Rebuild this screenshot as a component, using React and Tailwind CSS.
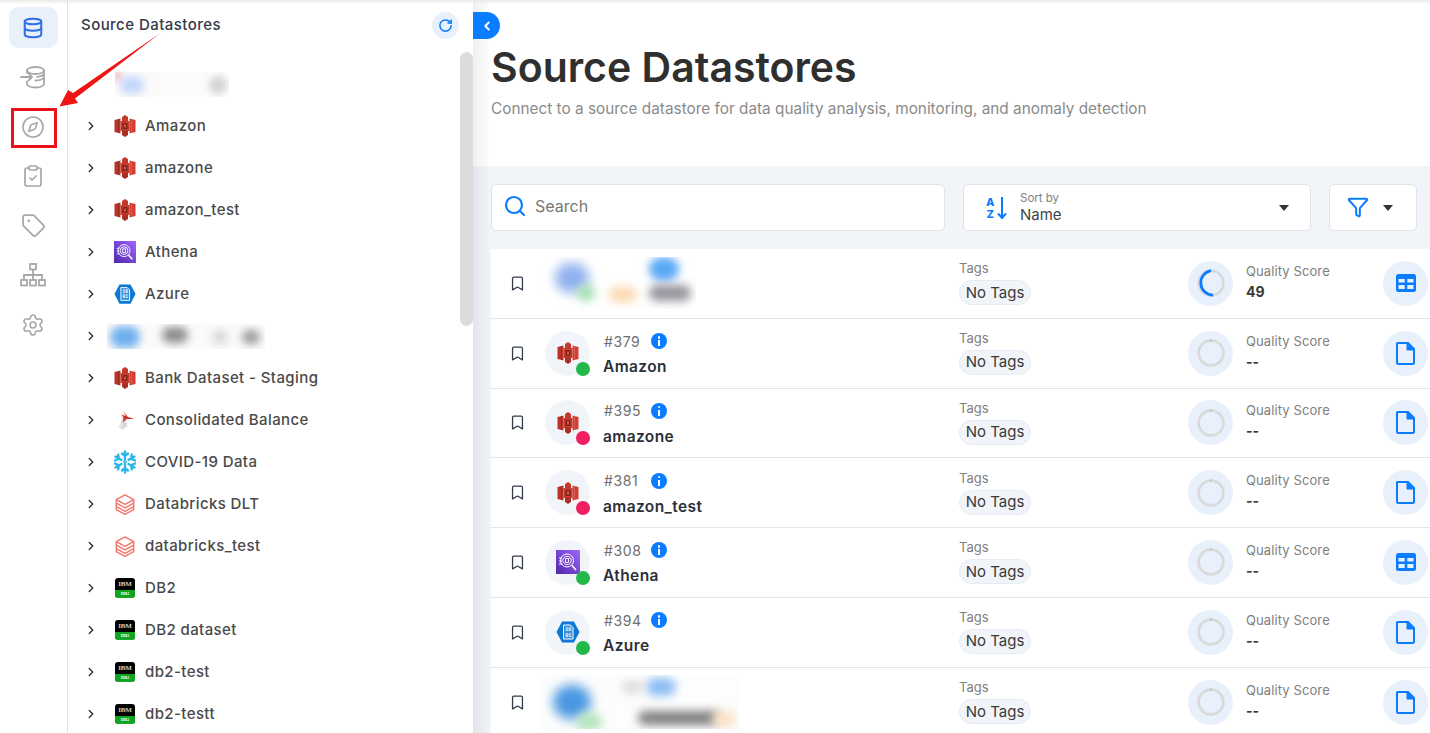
import React from "react";
import { Database, Compass, ClipboardCheck, Tag, Settings, RotateCw, ChevronLeft, ChevronRight, Search, Filter, Bookmark } from "lucide-react";

const S3 = ({ s = 24 }) => (
  <svg width={s} height={s} viewBox="0 0 24 24">
    <path d="M1.5 6 7.5 4.5V19.5L1.5 18Z" fill="#b9352a" />
    <path d="M22.5 6 16.5 4.5V19.5L22.5 18Z" fill="#d23f31" />
    <path d="M7.5 7H16.5V17H7.5Z" fill="#c93a2d" />
    <path d="M9 3 12 1 15 3V7.5H9Z" fill="#c23a2e" />
    <path d="M9 21 12 23 15 21V16.5H9Z" fill="#a93025" />
    <path d="M9.5 9H14.5V15H9.5Z" fill="#7f241b" />
    <path d="M11 10.5H13V13.5H11Z" fill="#d8544a" />
    <path d="M5.5 5V19" stroke="#8e2a20" strokeWidth=".8" />
    <path d="M18.5 5V19" stroke="#e0655a" strokeWidth=".8" />
  </svg>
);
const Athena = ({ s = 22 }) => (
  <svg width={s} height={s} viewBox="0 0 24 24">
    <defs>
      <linearGradient id="ath" x1="0" y1="1" x2="1" y2="0">
        <stop offset="0" stopColor="#4d27a8" />
        <stop offset="1" stopColor="#a166ff" />
      </linearGradient>
    </defs>
    <rect width="24" height="24" fill="url(#ath)" />
    <g fill="none" stroke="#fff" strokeWidth="1">
      <circle cx="11" cy="10.5" r="6.5" />
      <circle cx="11" cy="10.5" r="4.2" />
      <path d="M15.8 15.3 20 20" strokeWidth="1.6" />
      <path d="M3 8h3M3 11h3M3 14h3M9.5 8.5h3v4h-3z" />
    </g>
  </svg>
);
const Azure = ({ s = 22 }) => (
  <svg width={s} height={s} viewBox="0 0 24 24">
    <path d="M6 1.5H18L23.5 12 18 22.5H6L.5 12Z" fill="#0a78d4" />
    <path d="M7.5 5H14.5L17 7.5V19H7.5Z" fill="#fff" fillOpacity=".18" stroke="#fff" strokeWidth="1" />
    <text x="12.2" y="11" textAnchor="middle" fontSize="5" fontFamily="Liberation Mono" fill="#fff" fontWeight="700">10</text>
    <text x="12.2" y="16.5" textAnchor="middle" fontSize="5" fontFamily="Liberation Mono" fill="#fff" fontWeight="700">01</text>
  </svg>
);
const Sql = () => (
  <svg width="22" height="22" viewBox="0 0 24 24">
    <path d="M6 6C9 10 8 15 5 20L9 23 15 19 13 12Z" fill="#e3e5e8" />
    <path d="M10 13l5 3-6 6z" fill="#d4d7db" />
    <path d="M9 1C11 4 12 5 13 8L22 11 14 11 9 15C11 11 11 9 8 6L15 8.5 9 1Z" fill="#c8302c" />
  </svg>
);
const Snow = () => (
  <svg width="24" height="24" viewBox="0 0 24 24" fill="none" stroke="#29b5e8" strokeWidth="2.4" strokeLinecap="round">
    <path d="M12 1.5V9M9 3.5 12 6l3-2.5M12 22.5V15M9 20.5 12 18l3 2.5" />
    <path d="M2.5 6.5 8.5 10M2 10.5 5.8 8.8 5.2 4.7M21.5 6.5 15.5 10M22 10.5 18.2 8.8 18.8 4.7" />
    <path d="M2.5 17.5 8.5 14M2 13.5 5.8 15.2 5.2 19.3M21.5 17.5 15.5 14M22 13.5 18.2 15.2 18.8 19.3" />
    <path d="M12 10.4 13.4 12 12 13.6 10.6 12Z" strokeWidth="1.2" />
  </svg>
);
const Bricks = () => (
  <svg width="22" height="22" viewBox="0 0 24 24" fill="none" stroke="#f4756a" strokeWidth="1.5" strokeLinejoin="round">
    <path d="M12 2 2.5 7.2 12 12.4 21.5 7.2Z" />
    <path d="M2.5 11 12 16.2 21.5 11" />
    <path d="M2.5 14.8 12 20 21.5 14.8" />
    <path d="M2.5 7.2V18.2L12 23.2 21.5 18.2V7.2" />
  </svg>
);
const Db2 = () => (
  <div className="w-[20px] h-[20px] rounded-[3px] bg-black flex flex-col overflow-hidden font-['Liberation_Serif',serif] font-bold leading-none text-center border-b-[1px] border-[#18a92c]">
    <div className="h-[12px] text-[7px] text-[#cfcfcf] leading-[12px] tracking-[-0.2px]">IBM</div>
    <div className="flex-1 bg-[#11a51f] text-[4.5px] text-white leading-[7px]">DB2</div>
  </div>
);

const Blob = ({ c, l, t, w, h, b = "blur-[5px]" }) => (
  <div className={`absolute rounded-full ${c} ${b}`} style={{ left: l, top: t, width: w, height: h }} />
);

const tree = [
  ["blur1"],
  ["Amazon", S3],
  ["amazone", S3],
  ["amazon_test", S3],
  ["Athena", Athena],
  ["Azure", Azure],
  ["blur2"],
  ["Bank Dataset - Staging", S3],
  ["Consolidated Balance", Sql],
  ["COVID-19 Data", Snow],
  ["Databricks DLT", Bricks],
  ["databricks_test", Bricks],
  ["DB2", Db2],
  ["DB2 dataset", Db2],
  ["db2-test", Db2],
  ["db2-testt", Db2],
];

const GREEN = "bg-[#22b84a]";
const PINK = "bg-[#ef1f62]";

const rows = [
  { blur: 1, act: "table", score: "49" },
  { id: "#379", name: "Amazon", Icon: S3, dot: GREEN, act: "file" },
  { id: "#395", name: "amazone", Icon: S3, dot: PINK, act: "file" },
  { id: "#381", name: "amazon_test", Icon: S3, dot: PINK, act: "file" },
  { id: "#308", name: "Athena", Icon: Athena, dot: GREEN, act: "table" },
  { id: "#394", name: "Azure", Icon: Azure, dot: GREEN, act: "file" },
  { blur: 2, act: "file" },
];

const TableIcon = () => (
  <svg width="20" height="18" viewBox="0 0 20 18">
    <rect width="20" height="18" rx="2.5" fill="#0a7cff" />
    <path d="M2.5 5h6.2v3.6H2.5zM11.3 5h6.2v3.6h-6.2zM2.5 11h6.2v4H2.5zM11.3 11h6.2v4h-6.2z" fill="#e8f0fb" />
  </svg>
);
const FileIcon = () => (
  <svg width="19" height="23" viewBox="0 0 19 23" fill="none" stroke="#0a7cff" strokeWidth="2" strokeLinejoin="round">
    <path d="M1.5 1H12L18 7V20.5A1.5 1.5 0 0 1 16.5 22H2.5A1.5 1.5 0 0 1 1 20.5V1.5Z" />
    <path d="M11.5 1V7.5H18" fill="#0a7cff" />
  </svg>
);
const InfoDot = () => (
  <div className="w-[16px] h-[16px] rounded-full bg-[#0a7cff] flex flex-col items-center justify-center gap-[1.5px]">
    <div className="w-[2.5px] h-[2.5px] bg-white rounded-full" />
    <div className="w-[2.5px] h-[6px] bg-white" />
  </div>
);
const Caret = () => <div className="w-0 h-0 border-x-[5.5px] border-x-transparent border-t-[6px] border-t-[#333]" />;

const Ring = ({ score }) => (
  <div className="w-[45px] h-[45px] rounded-full bg-[#e8f0fb] flex items-center justify-center shrink-0">
    <svg width="28" height="28" viewBox="0 0 28 28" fill="none">
      <circle cx="14" cy="14" r="12.4" stroke="#d9d9d9" strokeWidth="2.6" />
      {score ? (
        <path d="M14 1.6A12.4 12.4 0 0 0 16 26.2" stroke="#0a7cff" strokeWidth="2.8" />
      ) : (
        <path d="M14 0.5V2.5" stroke="#9aa7b5" strokeWidth="0.8" />
      )}
    </svg>
  </div>
);

const Row = ({ r, last }) => (
  <div className={`h-[69.75px] flex items-center bg-white pl-[18px] shrink-0 ${last ? "" : "border-b-[1px] border-[#e3e5e8]"}`}>
    <Bookmark size={17} strokeWidth={1.8} className="text-[#333b4a] shrink-0" />
    {r.blur === 1 && (
      <div className="relative w-[155px] h-[52px] ml-[15px] mr-[263px] overflow-hidden shrink-0 bg-white">
        <Blob c="bg-[#8fb0ee]" l={14} t={6} w={34} h={30} b="blur-[6px]" />
        <Blob c="bg-[#a5e0b0]" l={36} t={28} w={18} h={16} />
        <Blob c="bg-[#5caaf5]" l={108} t={0} w={30} h={24} b="blur-[4px]" />
        <Blob c="bg-[#fbd9b0]" l={68} t={30} w={28} h={15} />
        <Blob c="bg-[#96939c]" l={108} t={28} w={42} h={16} b="blur-[5px]" />
      </div>
    )}
    {r.blur === 2 && (
      <div className="relative w-[199px] h-[54px] ml-[14px] mr-[220px] overflow-hidden shrink-0 bg-[#fdfdfd]">
        <Blob c="bg-[#4a97e2]" l={13} t={10} w={38} h={34} b="blur-[6px]" />
        <Blob c="bg-[#b5e5bd]" l={36} t={38} w={26} h={18} />
        <Blob c="bg-[#8cbdf5]" l={106} t={3} w={30} h={18} />
        <Blob c="bg-[#dadada]" l={82} t={6} w={22} h={12} />
        <Blob c="bg-[#7f7f7f]" l={98} t={36} w={82} h={14} b="blur-[5px]" />
        <Blob c="bg-[#fbe3c8]" l={172} t={36} w={24} h={16} />
      </div>
    )}
    {!r.blur && (
      <>
        <div className="relative w-[45px] h-[45px] rounded-full bg-[#f1f5f9] flex items-center justify-center ml-[19px] shrink-0">
          <r.Icon s={24} />
          <div className={`absolute right-0 bottom-0 w-[14px] h-[14px] rounded-full ${r.dot}`} />
        </div>
        <div className="w-[356px] ml-[13px] shrink-0 flex flex-col translate-y-[1px]">
          <div className="flex items-center h-[20px] text-[14px] text-[#6e6e6e] tracking-[0.6px]">
            <span className="w-[48px] pl-[1px]">{r.id}</span>
            <InfoDot />
          </div>
          <div className="text-[15.5px] font-semibold text-[#2b2f38] leading-[20px] mt-[6px] tracking-[0.4px]">{r.name}</div>
        </div>
      </>
    )}
    <div className="w-[229px] shrink-0 flex flex-col items-start -translate-y-[1px]">
      <div className="text-[13px] text-[#808080] leading-[18px]">Tags</div>
      <div className="mt-[3px] h-[25px] w-[72px] rounded-full bg-[#f1f5f9] border-[1px] border-[#e6ebf3] text-[15px] text-[#3a3a3a] flex items-center justify-center whitespace-nowrap">No Tags</div>
    </div>
    <Ring score={r.score} />
    <div className="w-[137px] ml-[13px] shrink-0 -translate-y-[1px]">
      <div className="text-[13px] text-[#808080] leading-[17px] tracking-[0.1px]">Quality Score</div>
      <div className="text-[14px] font-bold text-[#3a3a3a] leading-[20px] mt-[2px]">{r.score || "--"}</div>
    </div>
    <div className="w-[45px] h-[45px] rounded-full bg-[#e8f0fb] flex items-center justify-center shrink-0">
      {r.act === "table" ? <TableIcon /> : <FileIcon />}
    </div>
  </div>
);

export default function App() {
  return (
    <div className="relative w-[1430px] h-[733px] overflow-hidden bg-white flex font-['Inter',sans-serif]">
      {/* icon rail */}
      <nav className="w-[68px] h-full shrink-0 border-r-[1px] border-[#dfe1e4] flex flex-col items-center pt-[7px] pr-[1px] gap-[8.6px] text-[#a8a8a8]">
        <div className="w-[49px] h-[41px] rounded-[10px] bg-[#e8f0fb] flex items-center justify-center text-[#2f6fe8]">
          <Database size={22} strokeWidth={2.2} />
        </div>
        <div className="w-[49px] h-[41px] flex items-center justify-center">
          <svg width="26" height="24" viewBox="0 0 26 24" fill="none" stroke="currentColor" strokeWidth="1.8" strokeLinecap="round" strokeLinejoin="round">
            <ellipse cx="15.5" cy="5.5" rx="8.5" ry="3.5" />
            <path d="M7 5.5V8M24 5.5V19C24 21 20 22.5 15.5 22.5S7 21 7 19V16.5M24 12C24 14 20 15.5 15.5 15.5M24 8.5C24 10 21 11.5 17 11.8" />
            <path d="M1 12H12M8.5 8.5 12 12l-3.5 3.5" />
          </svg>
        </div>
        <div className="w-[49px] h-[41px] flex items-center justify-center"><Compass size={24} strokeWidth={1.6} /></div>
        <div className="w-[49px] h-[41px] flex items-center justify-center"><ClipboardCheck size={24} strokeWidth={1.7} /></div>
        <div className="w-[49px] h-[41px] flex items-center justify-center"><Tag size={25} strokeWidth={1.7} /></div>
        <div className="w-[49px] h-[41px] flex items-center justify-center">
          <svg width="26" height="24" viewBox="0 0 26 24" fill="none" stroke="currentColor" strokeWidth="1.8">
            <rect x="10" y="1" width="6" height="5.5" />
            <rect x="1" y="17" width="6" height="5.5" />
            <rect x="10" y="17" width="6" height="5.5" />
            <rect x="19" y="17" width="6" height="5.5" />
            <path d="M13 6.5V17M4 17V12H22V17" />
          </svg>
        </div>
        <div className="w-[49px] h-[41px] flex items-center justify-center"><Settings size={24} strokeWidth={1.6} /></div>
      </nav>

      {/* tree */}
      <aside className="relative w-[405px] h-full shrink-0 overflow-hidden">
        <div className="h-[63px] flex items-start pl-[13px] pr-[14px] pt-[12px] justify-between">
          <div className="text-[15px] font-medium text-[#333b4a] leading-[25px] tracking-[0.45px]">Source Datastores</div>
          <div className="w-[27px] h-[27px] rounded-full bg-[#e8f0fb] flex items-center justify-center text-[#0a7cff]">
            <RotateCw size={15} strokeWidth={2.4} />
          </div>
        </div>
        <div className="flex flex-col">
          {tree.map(([name, Icon], i) =>
            name === "blur1" ? (
              <div key={i} className="h-[42px] pl-[47px] flex items-center">
                <div className="relative w-[114px] h-[25px] overflow-hidden bg-[#fbfbfb]">
                  <Blob c="bg-[#f5c8cf]" l={-4} t={-2} w={12} h={12} b="blur-[3px]" />
                  <Blob c="bg-[#c3d6fb]" l={5} t={4} w={24} h={18} b="blur-[4px]" />
                  <Blob c="bg-[#d5d5d5]" l={94} t={4} w={18} h={18} b="blur-[3px]" />
                </div>
              </div>
            ) : name === "blur2" ? (
              <div key={i} className="h-[42px] flex items-center">
                <ChevronRight size={14} strokeWidth={2.4} className="ml-[16px] text-[#333] shrink-0" />
                <div className="relative w-[158px] h-[25px] ml-[9px] overflow-hidden bg-[#fbfbfb]">
                  <Blob c="bg-[#70b0ee]" l={3} t={2} w={30} h={22} b="blur-[4px]" />
                  <Blob c="bg-[#8d8d8d]" l={55} t={3} w={26} h={16} b="blur-[4px]" />
                  <Blob c="bg-[#d8d8d8]" l={105} t={6} w={16} h={14} b="blur-[4px]" />
                  <Blob c="bg-[#9a9a9a]" l={135} t={6} w={18} h={14} b="blur-[4px]" />
                </div>
              </div>
            ) : (
              <div key={i} className="h-[42px] flex items-center">
                <ChevronRight size={14} strokeWidth={2.4} className="ml-[16px] text-[#333] shrink-0" />
                <div className="w-[24px] h-[24px] ml-[15px] flex items-center justify-center shrink-0"><Icon /></div>
                <div className="ml-[8px] text-[15px] font-medium text-[#4a4a4a] whitespace-nowrap tracking-[0.4px]">{name}</div>
              </div>
            )
          )}
        </div>
        <div className="absolute left-[392px] top-[52px] w-[13px] h-[274px] rounded-t-full rounded-b-full bg-[#dcdcdc]" />
      </aside>

      {/* main */}
      <main className="relative flex-1 h-full flex flex-col min-w-0 overflow-hidden">
        <header className="h-[166px] shrink-0 bg-white pl-[18px] pt-[42px]">
          <h1 className="text-[41px] leading-[50px] font-semibold text-[#2f2f2f] tracking-[0px]">Source Datastores</h1>
          <p className="text-[15.35px] leading-[24px] mt-[5px] text-[#8a8a8a] whitespace-nowrap">Connect to a source datastore for data quality analysis, monitoring, and anomaly detection</p>
        </header>
        <div className="flex-1 bg-[#f1f5f9] pl-[18px]">
          <div className="h-[83px] flex items-start pt-[18px] pr-[13px] gap-[18px]">
            <div className="w-[454px] h-[47px] bg-white rounded-[5px] border-[1px] border-[#e0e3e8] flex items-center pl-[11px] pb-[3px]">
              <Search size={24} strokeWidth={2.2} className="text-[#0a7cff]" />
              <span className="ml-[8px] text-[16px] text-[#777]">Search</span>
            </div>
            <div className="w-[348px] h-[47px] bg-white rounded-[5px] border-[1px] border-[#e0e3e8] flex items-center pl-[22px] pr-[21px]">
              <svg width="22" height="24" viewBox="0 0 22 24" className="shrink-0">
                <text x="0" y="10" fontSize="11" fontWeight="800" fontFamily="Inter" fill="#0a7cff">A</text>
                <text x="0.5" y="22" fontSize="11" fontWeight="800" fontFamily="Inter" fill="#0a7cff">Z</text>
                <path d="M16 1V21M12 17.5 16 22l4-4.5" fill="none" stroke="#0a7cff" strokeWidth="2" />
              </svg>
              <div className="ml-[12px] flex-1">
                <div className="text-[11.5px] leading-[14px] text-[#808080]">Sort by</div>
                <div className="text-[15px] leading-[20px] text-[#444]">Name</div>
              </div>
              <Caret />
            </div>
            <div className="w-[88px] h-[47px] bg-white rounded-[5px] border-[1px] border-[#e0e3e8] flex items-center pl-[17px] pb-[2px]">
              <Filter size={22} strokeWidth={2.2} className="text-[#0a7cff]" />
              <div className="ml-[14px] mt-[2px]"><Caret /></div>
            </div>
          </div>
          <div className="flex flex-col">
            {rows.map((r, i) => <Row key={i} r={r} last={i === rows.length - 1} />)}
          </div>
        </div>
        <div className="absolute left-0 top-0 bottom-0 w-[18px] bg-gradient-to-r from-[#00000010] to-transparent pointer-events-none" />
        <div className="absolute left-0 top-[12px] w-[27px] h-[27px] rounded-r-full bg-[#0a7cff] flex items-center justify-center text-white">
          <ChevronLeft size={14} strokeWidth={3.2} />
        </div>
      </main>

      {/* top edge shadow */}
      <div className="absolute left-0 right-0 top-0 h-[4px] bg-gradient-to-b from-[#e9e9e9] to-transparent pointer-events-none" />

      {/* annotation */}
      <div className="absolute left-[11px] top-[108px] w-[46px] h-[40px] border-[3px] border-[#ea1217] pointer-events-none" />
      <svg className="absolute left-0 top-0 pointer-events-none" width="170" height="115" viewBox="0 0 170 115">
        <polygon points="160.5,33 73,93 68,90 59.5,106.5 78,103 75,98.5" fill="#f01414" />
      </svg>
    </div>
  );
}
